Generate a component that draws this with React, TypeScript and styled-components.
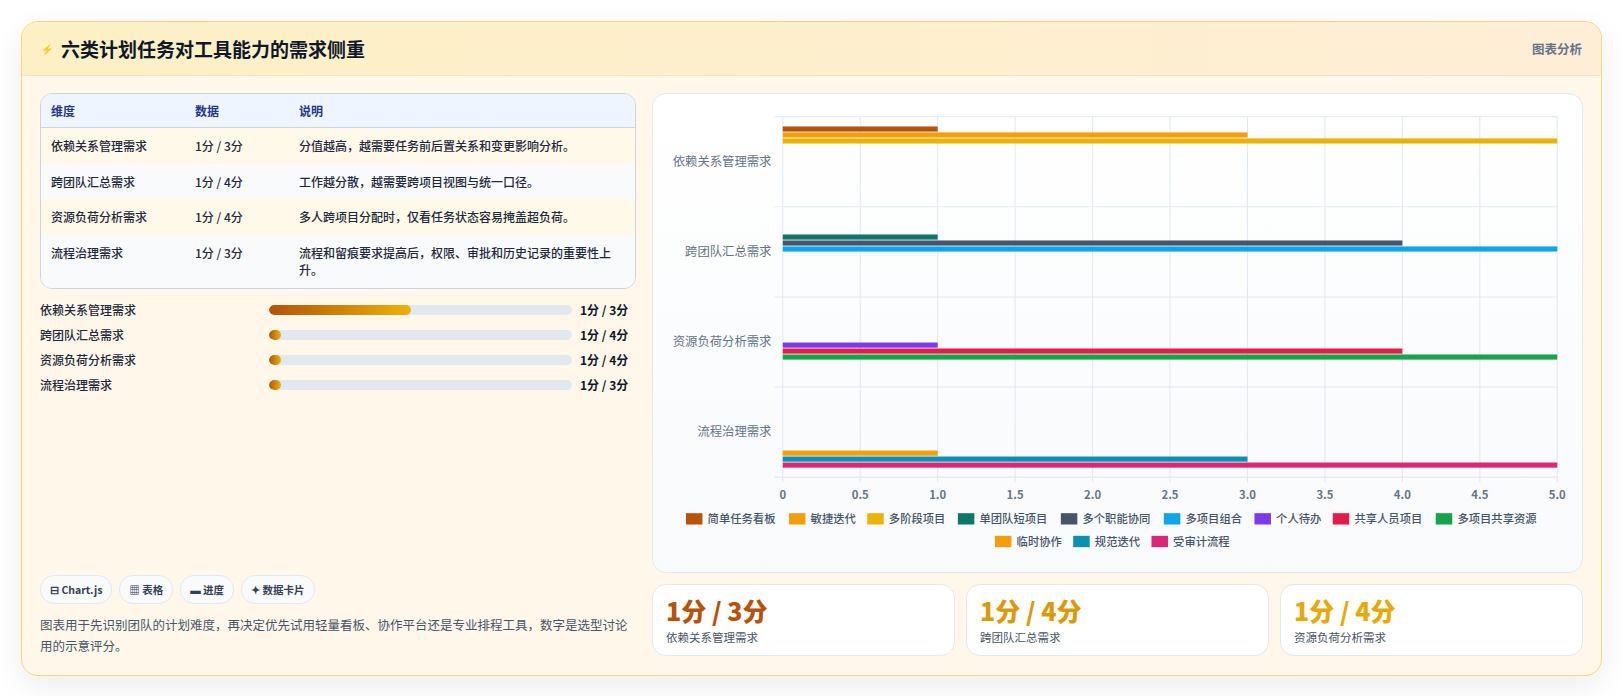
import React from "react";
import styled, { createGlobalStyle } from "styled-components";

const Global = createGlobalStyle`
  body { margin: 0; background: #fff; font-family: "Noto Sans CJK SC", "Noto Sans", sans-serif; color: #1e293b; }
`;

const Page = styled.div`padding: 21px 22px 20px 21px;`;
const Card = styled.section`
  border: 1px solid #f8d77a; border-radius: 17px; overflow: hidden;
  background: #fff8ea; box-shadow: 0 10px 30px rgba(15,23,42,0.08);
  height: 655px; display: flex; flex-direction: column; box-sizing: border-box;
`;
const Header = styled.header`
  height: 54px; flex: none; display: flex; align-items: center; justify-content: space-between;
  padding: 0 19px; background: linear-gradient(90deg, #fdf0c4, #feeed6);
  border-bottom: 1px solid #f3e3c4; box-sizing: border-box;
`;
const Title = styled.h2`margin: 0; font-size: 19px; font-weight: 700; color: #0f172a; display: flex; align-items: center; gap: 8px;`;
const Bolt = styled.span`font-size: 10px; color: #4f46e5;`;
const HeadTag = styled.span`font-size: 12.5px; font-weight: 700; color: #64748b;`;
const Body = styled.div`flex: 1; display: grid; grid-template-columns: 596px 1fr; gap: 16px; padding: 17px 18px 19px 18px;`;
const Left = styled.div`display: flex; flex-direction: column; justify-content: space-between;`;
const Right = styled.div`display: flex; flex-direction: column; gap: 11px;`;

const TableWrap = styled.div`border: 1px solid #cbd5e1; border-radius: 12px; overflow: hidden; background: #fff;`;
const Table = styled.table`width: 100%; border-collapse: collapse; font-size: 12px;`;
const Th = styled.th`text-align: left; font-weight: 700; color: #1e3a8a; background: #eef5fe; padding: 0 10px; height: 33px; border-bottom: 1px solid #cbd5e1;`;
const Tr = styled.tr<{ $alt: boolean }>`background: ${p => (p.$alt ? "#f8fafc" : "#fff9ea")}; & + & td { border-top: 1px solid #e2e8f0; }`;
const Td = styled.td`padding: 9px 10px; color: #1e293b; vertical-align: top; line-height: 17.5px; font-weight: 500;`;

const Bars = styled.div`display: flex; flex-direction: column; gap: 7px; margin-top: 12px;`;
const BarRow = styled.div`display: grid; grid-template-columns: 221px 303px 1fr; gap: 8px; align-items: center; font-size: 12px; height: 18px;`;
const BarLabel = styled.span`color: #1e293b; font-weight: 500;`;
const Track = styled.div`height: 10px; border-radius: 5px; background: #e2e8f0; overflow: hidden;`;
const Fill = styled.div`height: 100%; border-radius: 5px; background: linear-gradient(90deg, #b45309, #eab308);`;
const BarVal = styled.span`font-weight: 700; color: #0f172a;`;

const Bottom = styled.div`display: flex; flex-direction: column; gap: 10px;`;
const Chips = styled.div`display: flex; gap: 7px;`;
const Chip = styled.span`font-size: 10.5px; font-weight: 700; color: #334155; background: #f8fafc; border: 1px solid #e2e8f0; border-radius: 14px; height: 27px; padding: 0 9px; display: inline-flex; align-items: center;`;
const Note = styled.p`margin: 0; font-size: 12.5px; line-height: 21px; color: #475569;`;

const ChartBox = styled.div`flex: 1; border: 1px solid #e2e8f0; border-radius: 14px; background: linear-gradient(180deg,#fff,#f8fafc); overflow: hidden;`;
const ChartSvg = styled.svg`display: block; width: 100%; height: auto;`;
const Stats = styled.div`display: grid; grid-template-columns: repeat(3, 1fr); gap: 11px;`;
const Stat = styled.div`height: 72px; box-sizing: border-box; border: 1px solid #e2e8f0; border-radius: 14px; background: #fff; padding: 9px 13px;`;
const StatVal = styled.div<{ $c: string }>`font-size: 25px; font-weight: 800; color: ${p => p.$c}; line-height: 33px;`;
const StatLabel = styled.div`font-size: 11.5px; color: #475569; margin-top: 2px;`;

const rows = [
  ["依赖关系管理需求", "1分 / 3分", "分值越高，越需要任务前后置关系和变更影响分析。"],
  ["跨团队汇总需求", "1分 / 4分", "工作越分散，越需要跨项目视图与统一口径。"],
  ["资源负荷分析需求", "1分 / 4分", "多人跨项目分配时，仅看任务状态容易掩盖超负荷。"],
  ["流程治理需求", "1分 / 3分", "流程和留痕要求提高后，权限、审批和历史记录的重要性上升。"],
];
const fills = [47, 4, 4, 4];

const cats = ["依赖关系管理需求", "跨团队汇总需求", "资源负荷分析需求", "流程治理需求"];
const series = [
  ["简单任务看板", "#b45309", 1], ["敏捷迭代", "#f59e0b", 3], ["多阶段项目", "#eab308", 5],
  ["单团队短项目", "#0f766e", 1], ["多个职能协同", "#475569", 4], ["多项目组合", "#0ea5e9", 5],
  ["个人待办", "#7c3aed", 1], ["共享人员项目", "#e11d48", 4], ["多项目共享资源", "#16a34a", 5],
  ["临时协作", "#f59e0b", 1], ["规范迭代", "#0891b2", 3], ["受审计流程", "#db2777", 5],
] as [string, string, number][];

function Chart() {
  const x0 = 126, x1 = 878, y0 = 22, y1 = 372;
  const band = (y1 - y0) / 4;
  const sx = (v: number) => x0 + (v / 5) * (x1 - x0);
  const leg1 = series.slice(0, 9), leg2 = series.slice(9);
  const legW = (s: string) => 18 + s.length * 12 + 10;
  const row = (items: typeof series, y: number) => {
    const total = items.reduce((a, s) => a + legW(s[0]), 0);
    let x = 452 - total / 2;
    return items.map(s => {
      const gx = x; x += legW(s[0]);
      return (
        <g key={s[0] + y}>
          <rect x={gx} y={y - 6} width={16} height={11} fill={s[1]} />
          <text x={gx + 21} y={y + 4} fontSize={11} fill="#475569" fontWeight={500}>{s[0]}</text>
        </g>
      );
    });
  };
  return (
    <ChartSvg viewBox="0 0 902 462">
      {Array.from({ length: 11 }, (_, i) => (
        <g key={i}>
          <line x1={sx(i * 0.5)} x2={sx(i * 0.5)} y1={y0} y2={y1 + 5} stroke="#e2e8f0" />
          <text x={sx(i * 0.5)} y={393} fontSize={11} fill="#64748b" textAnchor="middle" fontWeight={600}>{i === 0 ? "0" : (i * 0.5).toFixed(1)}</text>
        </g>
      ))}
      {Array.from({ length: 5 }, (_, i) => (
        <line key={i} x1={x0 - 8} x2={x1} y1={y0 + band * i} y2={y0 + band * i} stroke="#e2e8f0" />
      ))}
      {cats.map((c, i) => (
        <text key={c} x={115} y={y0 + band * i + band / 2 + 4} fontSize={12} fill="#64748b" textAnchor="end">{c}</text>
      ))}
      {series.map((s, k) => {
        const ci = Math.floor(k / 3);
        const y = y0 + band * ci + 9.5 + 5.8 * k;
        return <rect key={k} x={x0} y={y} width={sx(s[2]) - x0} height={5} fill={s[1]} />;
      })}
      {row(leg1, 413)}
      {row(leg2, 435)}
    </ChartSvg>
  );
}

export default function App() {
  return (
    <Page>
      <Global />
      <Card>
        <Header>
          <Title><Bolt>⚡</Bolt>六类计划任务对工具能力的需求侧重</Title>
          <HeadTag>图表分析</HeadTag>
        </Header>
        <Body>
          <Left>
            <div>
              <TableWrap>
                <Table>
                  <thead>
                    <tr><Th style={{ width: 124 }}>维度</Th><Th style={{ width: 84 }}>数据</Th><Th>说明</Th></tr>
                  </thead>
                  <tbody>
                    {rows.map((r, i) => (
                      <Tr key={i} $alt={i % 2 === 1}><Td>{r[0]}</Td><Td>{r[1]}</Td><Td>{r[2]}</Td></Tr>
                    ))}
                  </tbody>
                </Table>
              </TableWrap>
              <Bars>
                {rows.map((r, i) => (
                  <BarRow key={i}>
                    <BarLabel>{r[0]}</BarLabel>
                    <Track><Fill style={{ width: `${fills[i]}%` }} /></Track>
                    <BarVal>{r[1]}</BarVal>
                  </BarRow>
                ))}
              </Bars>
            </div>
            <Bottom>
              <Chips>
                <Chip>⊟ Chart.js</Chip><Chip>▦ 表格</Chip><Chip>▬ 进度</Chip><Chip>✦ 数据卡片</Chip>
              </Chips>
              <Note>图表用于先识别团队的计划难度，再决定优先试用轻量看板、协作平台还是专业排程工具，数字是选型讨论用的示意评分。</Note>
            </Bottom>
          </Left>
          <Right>
            <ChartBox><Chart /></ChartBox>
            <Stats>
              <Stat><StatVal $c="#b45309">1分 / 3分</StatVal><StatLabel>依赖关系管理需求</StatLabel></Stat>
              <Stat><StatVal $c="#d99a0b">1分 / 4分</StatVal><StatLabel>跨团队汇总需求</StatLabel></Stat>
              <Stat><StatVal $c="#e6a908">1分 / 4分</StatVal><StatLabel>资源负荷分析需求</StatLabel></Stat>
            </Stats>
          </Right>
        </Body>
      </Card>
    </Page>
  );
}
